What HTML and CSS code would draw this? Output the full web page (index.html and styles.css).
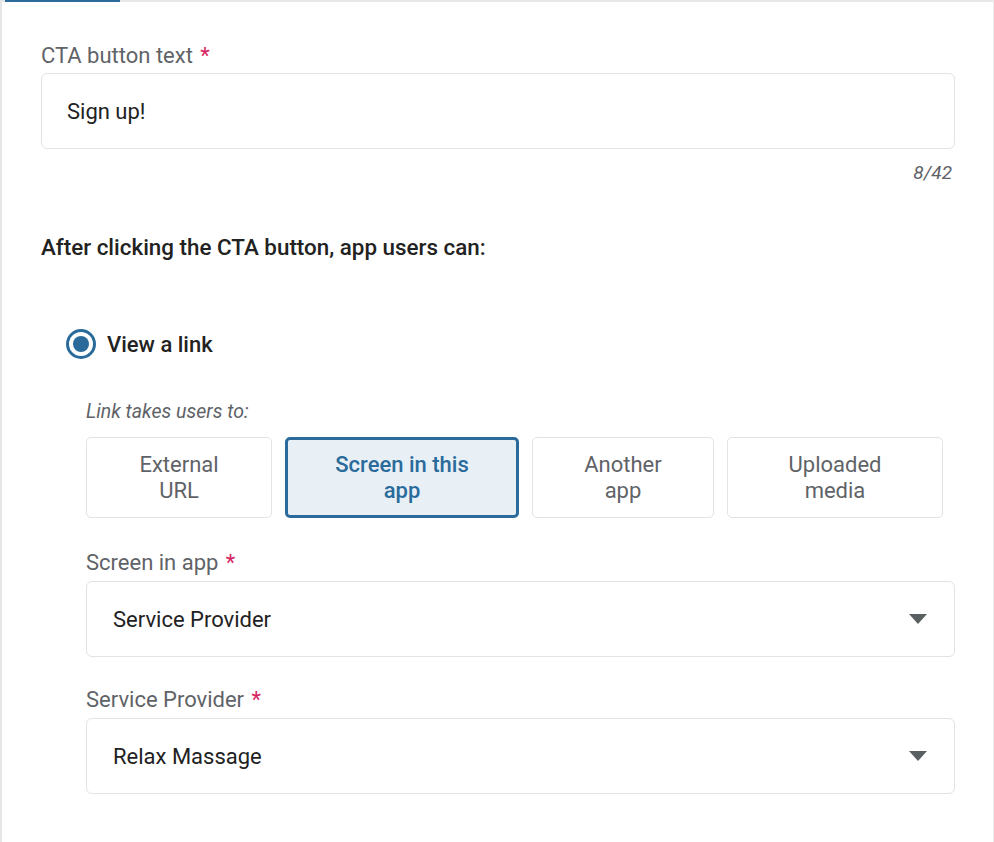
FILE: index.html
```html
<!DOCTYPE html>
<html>
<head>
    <title>CTA settings</title>
    <meta name="viewport" content="width=device-width, initial-scale=1.0">
    <link rel="stylesheet" href="styles.css">
</head>
<body>
    <div class="tab-strip">
        <div class="tab active"></div>
        <div class="tab"></div>
        <div class="tab"></div>
        <div class="tab"></div>
    </div>
    <div class="panel">
        <label class="field-label">CTA button text <span class="req">*</span></label>
        <div class="text-input">Sign up!</div>
        <div class="counter">8/42</div>

        <h3 class="section-title">After clicking the CTA button, app users can:</h3>

        <div class="radio-row">
            <span class="radio checked"></span>
            <span class="radio-label">View a link</span>
        </div>

        <div class="sub-options">
            <div class="hint">Link takes users to:</div>
            <div class="choice-grid">
                <div class="choice">External<br>URL</div>
                <div class="choice selected">Screen in this<br>app</div>
                <div class="choice">Another<br>app</div>
                <div class="choice">Uploaded<br>media</div>
            </div>

            <label class="field-label sub">Screen in app <span class="req">*</span></label>
            <div class="select-box">
                <span>Service Provider</span>
                <svg class="caret" width="18" height="10" viewBox="0 0 18 10"><path d="M0 0 H18 L9 10 Z"/></svg>
            </div>

            <label class="field-label sub">Service Provider <span class="req">*</span></label>
            <div class="select-box">
                <span>Relax Massage</span>
                <svg class="caret" width="18" height="10" viewBox="0 0 18 10"><path d="M0 0 H18 L9 10 Z"/></svg>
            </div>
        </div>
    </div>
</body>
</html>
```

FILE: styles.css
```css
* {
    margin: 0;
    padding: 0;
    box-sizing: border-box;
}

html, body {
    width: 100%;
    height: 100%;
    overflow: hidden;
}

body {
    font-family: Roboto, 'Liberation Sans', sans-serif;
    background: #fff;
    color: #222;
    border-left: 2px solid #e6e6e6;
    border-right: 1px solid #ececec;
}

.tab-strip {
    display: flex;
    height: 2px;
    background: #e8e8e8;
    padding-left: 3px;
}

.tab {
    width: 115px;
    height: 2px;
}

.tab.active {
    background: #2a6b9b;
}

.panel {
    padding: 42px 38px 0 39px;
}

.field-label {
    display: block;
    font-size: 22px;
    line-height: 24px;
    color: #5f6368;
}

.req {
    color: #d6245f;
    margin-left: 2px;
}

.text-input {
    margin-top: 5px;
    height: 76px;
    border: 1px solid #e3e3e3;
    border-radius: 6px;
    padding: 0 25px;
    display: flex;
    align-items: center;
    font-size: 22px;
    color: #222;
}

.counter {
    margin-top: 14px;
    text-align: right;
    padding-right: 3px;
    font-size: 19px;
    line-height: 20px;
    font-style: italic;
    color: #5f6368;
}

.section-title {
    margin-top: 52px;
    font-size: 22.4px;
    line-height: 24px;
    font-weight: 500;
    color: #222;
}

.radio-row {
    margin-top: 70px;
    margin-left: 25px;
    display: flex;
    align-items: center;
    gap: 11px;
}

.radio {
    width: 30px;
    height: 30px;
    border-radius: 50%;
    border: 3px solid #2a6b9b;
    display: flex;
    align-items: center;
    justify-content: center;
}

.radio.checked::after {
    content: '';
    width: 16px;
    height: 16px;
    border-radius: 50%;
    background: #2a6b9b;
}

.radio-label {
    font-size: 22px;
    font-weight: 500;
    color: #222;
}

.sub-options {
    padding-left: 45px;
}

.hint {
    margin-top: 43px;
    font-size: 19.5px;
    line-height: 20px;
    font-style: italic;
    color: #5f6368;
}

.choice-grid {
    margin-top: 15px;
    display: grid;
    grid-template-columns: 186px 234px 182px 216px;
    gap: 13px;
}

.choice {
    height: 81px;
    border: 1px solid #e3e3e3;
    border-radius: 5px;
    display: flex;
    align-items: center;
    justify-content: center;
    text-align: center;
    font-size: 22px;
    line-height: 26px;
    color: #5f6368;
}

.choice.selected {
    border: 3px solid #2a6b9b;
    background: #e8f0f6;
    color: #2a6b9b;
    font-weight: 500;
}

.field-label.sub {
    margin-top: 33px;
}

.select-box {
    margin-top: 6px;
    height: 76px;
    border: 1px solid #e3e3e3;
    border-radius: 6px;
    padding: 0 27px 0 26px;
    display: flex;
    align-items: center;
    justify-content: space-between;
    font-size: 22px;
    color: #222;
}

.select-box + .field-label.sub {
    margin-top: 31px;
}

.caret {
    fill: #5a6062;
}
```
